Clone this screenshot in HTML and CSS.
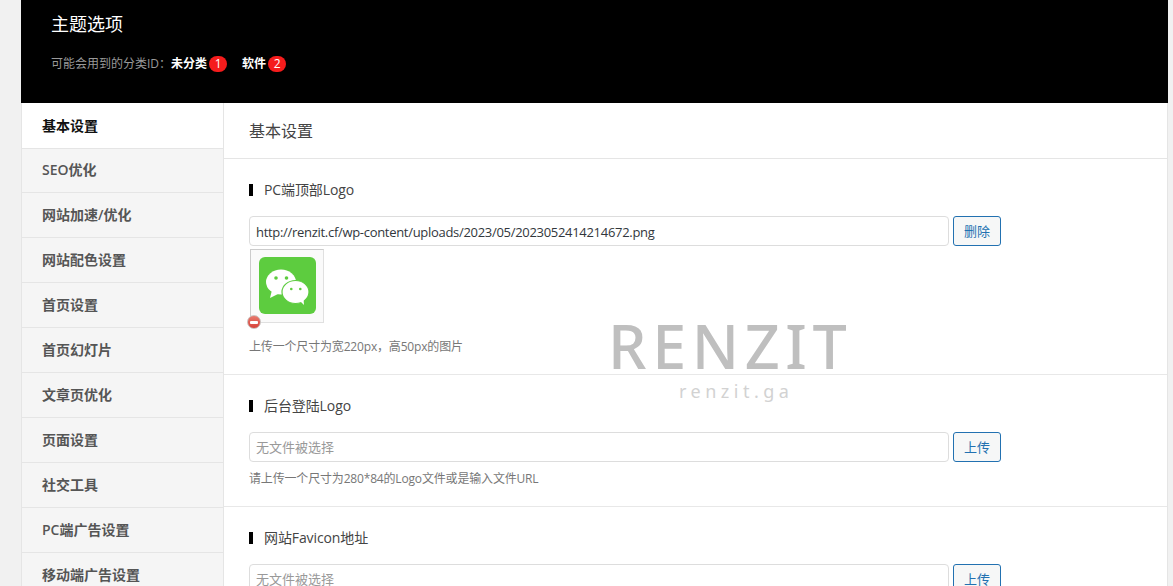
FILE: index.html
```html
<!DOCTYPE html>
<html lang="zh-CN">
<head>
<meta charset="utf-8">
<title>主题选项</title>
<link rel="stylesheet" href="styles.css">
</head>
<body>
<div class="wrap">
  <header class="top">
    <h1 class="top-title">主题选项</h1>
    <p class="top-sub">可能会用到的分类ID：<b class="cat">未分类</b><span class="num">1</span><b class="cat cat-second">软件</b><span class="num">2</span></p>
  </header>
  <div class="panel">
    <nav class="side">
      <a class="side-item active">基本设置</a>
      <a class="side-item short">SEO优化</a>
      <a class="side-item">网站加速/优化</a>
      <a class="side-item">网站配色设置</a>
      <a class="side-item">首页设置</a>
      <a class="side-item">首页幻灯片</a>
      <a class="side-item">文章页优化</a>
      <a class="side-item">页面设置</a>
      <a class="side-item">社交工具</a>
      <a class="side-item">PC端广告设置</a>
      <a class="side-item">移动端广告设置</a>
    </nav>
    <main class="main">
      <h2 class="main-title">基本设置</h2>
      <section class="field first">
        <h3 class="field-title">PC端顶部Logo</h3>
        <div class="row">
          <div class="input">http://renzit.cf/wp-content/uploads/2023/05/2023052414214672.png</div>
          <button class="btn">删除</button>
        </div>
        <div class="preview">
          <svg class="wechat" viewBox="0 0 57 57" width="57" height="57" aria-hidden="true">
            <rect width="57" height="57" rx="6" fill="#5dcc3f"/>
            <ellipse cx="22" cy="25" rx="15" ry="12.500" fill="#fff"/>
            <path d="M13 33l-2 8 8-4z" fill="#fff"/>
            <ellipse cx="36.500" cy="35" rx="13.500" ry="11.500" fill="#fff" stroke="#5dcc3f" stroke-width="1.200"/>
            <path d="M41 44l4 4-.5-6z" fill="#fff"/>
            <circle cx="17" cy="21" r="1.800" fill="#5dcc3f"/>
            <circle cx="27.500" cy="21" r="1.800" fill="#5dcc3f"/>
            <circle cx="32.300" cy="32" r="1.300" fill="#5dcc3f"/>
            <circle cx="41.300" cy="32" r="1.300" fill="#5dcc3f"/>
          </svg>
          <span class="remove"></span>
        </div>
        <p class="hint">上传一个尺寸为宽220px，高50px的图片</p>
      </section>
      <section class="field">
        <h3 class="field-title">后台登陆Logo</h3>
        <div class="row">
          <div class="input empty">无文件被选择</div>
          <button class="btn">上传</button>
        </div>
        <p class="hint">请上传一个尺寸为280*84的Logo文件或是输入文件URL</p>
      </section>
      <section class="field">
        <h3 class="field-title">网站Favicon地址</h3>
        <div class="row">
          <div class="input empty">无文件被选择</div>
          <button class="btn">上传</button>
        </div>
      </section>
    </main>
  </div>
</div>
<div class="mark">
  <div class="mark-big">RENZIT</div>
  <div class="mark-small">renzit.ga</div>
</div>
</body>
</html>
```

FILE: styles.css
```css
* { box-sizing: border-box; }
html, body { margin: 0; height: 586px; overflow: hidden; }
body {
  background: #f1f1f1;
  font-family: "Open Sans", "Noto Sans CJK SC", sans-serif;
  font-size: 13px;
  color: #444;
}
.wrap { margin-left: 21px; width: 1147px; }
.top { background: #000; height: 103px; padding: 12px 30px 0; color: #fff; }
.top-title { margin: 0; font-size: 18px; font-weight: 400; line-height: 25px; }
.top-sub { margin: 15px 0 0; font-size: 12px; line-height: 24px; color: #999; display: flex; align-items: center; }
.cat { color: #fff; font-weight: 700; }
.cat-second { margin-left: 15px; }
.num {
  width: 18px; height: 16px; margin-left: 2px; border-radius: 8px;
  background: #f51c1c; color: #fff; text-align: center; line-height: 16px; font-size: 12px;
}
.panel { display: flex; background: #fff; height: 483px; border-right: 1px solid #e5e5e5; overflow: hidden; }
.side { width: 203px; flex: none; background: #f5f5f5; border-left: 1px solid #e5e5e5; border-right: 1px solid #e5e5e5; }
.side-item {
  display: block; height: 45px; padding-left: 20px; line-height: 43px; font-size: 14px;
  font-weight: 600; color: #555; border-bottom: 1px solid #e5e5e5;
}
.side-item.short { height: 44px; line-height: 41px; }
.side-item.active { height: 46px; line-height: 45px; background: #fff; color: #111; }
.main { flex: 1; min-width: 0; }
.main-title {
  margin: 0; height: 56px; padding-left: 25px; font-size: 16px; font-weight: 400;
  line-height: 56px; color: #444; border-bottom: 1px solid #e5e5e5;
}
.field { padding: 20px 25px 0; border-bottom: 1px solid #e8e8e8; height: 132px; }
.field.first { height: 216px; }
.field:last-child { border-bottom: 0; }
.field-title {
  margin: 0; height: 22px; font-size: 14px; font-weight: 400; line-height: 22px;
  color: #444; padding-left: 15px; position: relative; letter-spacing: -0.1px;
}
.field-title::before {
  content: ""; position: absolute; left: 0; top: 5px; width: 4px; height: 12px; background: #000;
}
.row { display: flex; gap: 4px; margin-top: 15px; height: 30px; }
.input {
  width: 700px; height: 30px; border: 1px solid #ddd; border-radius: 4px; padding: 0 6px;
  line-height: 30px; color: #32373c; background: #fff; font-size: 13px; white-space: nowrap; letter-spacing: -0.3px;
}
.input.empty { color: #999; letter-spacing: 0; line-height: 29px; }
.btn {
  width: 48px; height: 30px; padding: 0 0 2px; border: 1px solid #2271b1; border-radius: 3px;
  background: #f6f7f7; color: #2271b1; font: inherit; font-size: 13px;
}
.preview {
  position: relative; width: 74px; height: 74px; margin-top: 3px; margin-left: 1px;
  border: 1px solid #e0e0e0; border-left-color: #ccc; border-top-color: #ccc; background: #fafafa; padding: 7px 0 0 8px;
}
.wechat { display: block; }
.remove {
  position: absolute; left: -4px; bottom: -7px; width: 14px; height: 14px; border-radius: 50%;
  background: linear-gradient(#e8796d, #d8433a); border: 1px solid #c9c0be; display: flex; align-items: center; justify-content: center;
}
.remove::after { content: ""; width: 8px; height: 3px; background: #fff; border-radius: 1px; }
.hint { margin: 16px 0 0; font-size: 12px; line-height: 17px; color: #777; letter-spacing: -0.17px; }
.preview + .hint { margin-top: 15px; }
.row + .hint { margin-top: 8px; }
.mark { position: absolute; left: 608px; top: 315px; width: 240px; pointer-events: none; }
.mark-big { font-family: "Noto Sans", sans-serif; font-weight: 500; font-size: 61px; line-height: 62px; letter-spacing: 5.600px; color: #bfbfbf; white-space: nowrap; }
.mark-small { font-family: "Noto Sans", sans-serif; font-size: 18px; line-height: 24px; letter-spacing: 4.500px; color: #d2d2d2; margin: 2px 0 0 71px; white-space: nowrap; }
```
